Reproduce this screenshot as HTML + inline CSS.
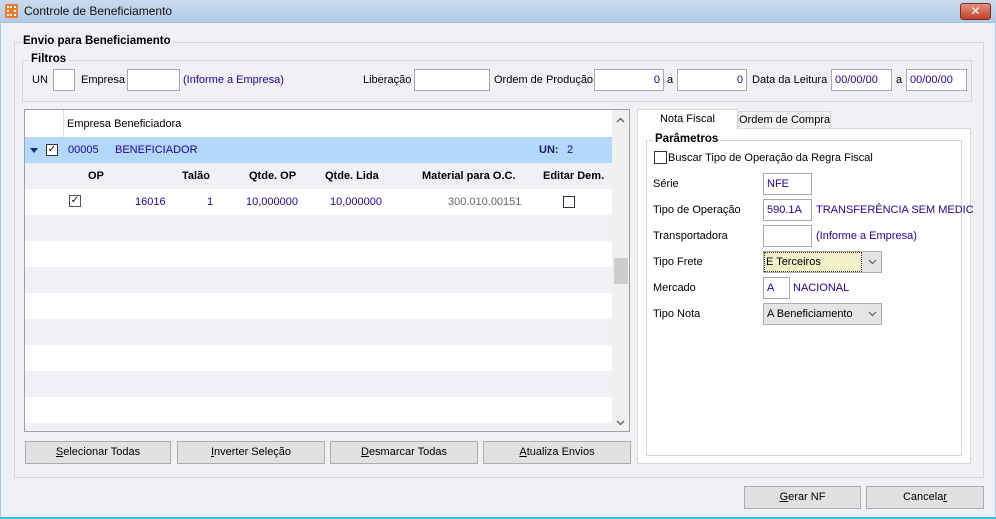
<!DOCTYPE html>
<html><head><meta charset="utf-8"><style>
*{box-sizing:border-box;margin:0;padding:0}
body{width:996px;height:519px;overflow:hidden;font-family:"Liberation Sans","DejaVu Sans",sans-serif;font-size:11px;color:#000;background:#f0f1f7;position:relative}
.a{position:absolute;white-space:nowrap}
.tb{left:0;top:0;width:996px;height:23px;background:linear-gradient(#c9daee,#b3cbe7);border-bottom:1px solid #a9c0dd}
.gb{border:1px solid #d5d6dc}
.gt{background:#f0f1f7;font-weight:bold;font-size:11.5px;padding:0 2px}
.in{background:#fff;border:1px solid #a9a9a9;height:22px;color:#2200aa;padding:0 3px;line-height:20px;font-size:11px}
.blue{color:#2200aa}
.btn{background:#e1e1e1;border:1px solid #adadad;height:23px;text-align:center;line-height:21px;font-size:11px}
.row{left:25px;width:587px;height:26px}
.cb{width:12px;height:12px;border:1px solid #333;background:#fff}
.hd{font-weight:bold;font-size:11px}
</style></head><body>
<div class="a tb"></div>
<div class="a" style="left:0;top:23px;width:1px;height:496px;background:#a9cbed"></div>
<div class="a" style="right:0;top:23px;width:1px;height:496px;background:#a9cbed"></div>
<div class="a" style="left:0;top:517px;width:996px;height:2px;background:#3bbde8"></div>
<div class="a" style="left:5px;top:4px;width:13px;height:14px;background:#f07a2c;border-radius:1px"></div>
<div class="a" style="left:7px;top:6px;width:9px;height:10px;border:2px dotted #fff"></div>
<div class="a" style="left:24px;top:4px;font-size:12px;color:#111">Controle de Beneficiamento</div>
<div class="a" style="left:960px;top:3px;width:31px;height:17px;background:linear-gradient(#e5917f,#c2412c);border:1px solid #7a2a20;border-radius:3px;color:#fff;text-align:center;font-weight:bold;font-size:12px;line-height:15px">✕</div>

<div class="a gb" style="left:14px;top:42px;width:970px;height:436px"></div>
<div class="a gt" style="left:21px;top:35px">Envio para Beneficiamento</div>
<div class="a gb" style="left:22px;top:60px;width:950px;height:42px"></div>
<div class="a gt" style="left:29px;top:53px">Filtros</div>

<div class="a" style="left:32px;top:74px">UN</div>
<div class="a in" style="left:53px;top:69px;width:22px"></div>
<div class="a" style="left:81px;top:74px">Empresa</div>
<div class="a in" style="left:127px;top:69px;width:53px"></div>
<div class="a blue" style="left:183px;top:74px">(Informe a Empresa)</div>
<div class="a" style="left:363px;top:74px">Liberação</div>
<div class="a in" style="left:414px;top:69px;width:76px"></div>
<div class="a" style="left:494px;top:74px">Ordem de Produção</div>
<div class="a in" style="left:594px;top:69px;width:70px;text-align:right">0</div>
<div class="a" style="left:667px;top:74px">a</div>
<div class="a in" style="left:677px;top:69px;width:70px;text-align:right">0</div>
<div class="a" style="left:752px;top:74px">Data da Leitura</div>
<div class="a in" style="left:831px;top:69px;width:61px">00/00/00</div>
<div class="a" style="left:896px;top:74px">a</div>
<div class="a in" style="left:906px;top:69px;width:61px">00/00/00</div>

<!-- grid -->
<div class="a" style="left:24px;top:109px;width:606px;height:323px;border:1px solid #a0a0a0;background:#fff"></div>
<div class="a" style="left:63px;top:110px;width:1px;height:27px;background:#e0e0e0"></div>
<div class="a" style="left:67px;top:118px">Empresa Beneficiadora</div>
<div class="a row" style="top:137px;background:#b3d8fc"></div>
<div class="a" style="left:30px;top:148px;width:0;height:0;border-left:4px solid transparent;border-right:4px solid transparent;border-top:5px solid #1a2a88"></div>
<div class="a cb" style="left:46px;top:144px;text-align:center;line-height:9px;font-size:10px">✓</div>
<div class="a blue" style="left:68px;top:144px">00005</div>
<div class="a blue" style="left:115px;top:144px">BENEFICIADOR</div>
<div class="a hd" style="left:539px;top:144px;color:#1a1a66">UN:</div>
<div class="a blue" style="left:567px;top:144px">2</div>
<div class="a row" style="top:163px;background:#f0f1f7"></div>
<div class="a hd" style="left:88px;top:170px">OP</div>
<div class="a hd" style="left:182px;top:170px">Talão</div>
<div class="a hd" style="left:249px;top:170px">Qtde. OP</div>
<div class="a hd" style="left:325px;top:170px">Qtde. Lida</div>
<div class="a hd" style="left:422px;top:170px">Material para O.C.</div>
<div class="a hd" style="left:543px;top:170px">Editar Dem.</div>
<div class="a cb" style="left:69px;top:195px;text-align:center;line-height:9px;font-size:10px;border-color:#555">✓</div>
<div class="a blue" style="left:135px;top:196px">16016</div>
<div class="a blue" style="left:207px;top:196px">1</div>
<div class="a blue" style="left:246px;top:196px">10,000000</div>
<div class="a blue" style="left:330px;top:196px">10,000000</div>
<div class="a" style="left:448px;top:196px;color:#666">300.010.00151</div>
<div class="a cb" style="left:563px;top:196px"></div>
<div class="a row" style="top:215px;background:#f0f1f7"></div>
<div class="a row" style="top:267px;background:#f0f1f7"></div>
<div class="a row" style="top:319px;background:#f0f1f7"></div>
<div class="a row" style="top:371px;background:#f0f1f7"></div>
<div class="a row" style="top:423px;height:8px;background:#f0f1f7"></div>
<div class="a" style="left:612px;top:110px;width:17px;height:321px;background:#f0f0f0"></div>
<div class="a" style="left:614px;top:258px;width:14px;height:26px;background:#cdcdcd"></div>
<svg class="a" style="left:616px;top:117px" width="9" height="6"><path d="M1 5L4.5 1.5L8 5" stroke="#606060" stroke-width="1.3" fill="none"/></svg>
<svg class="a" style="left:616px;top:420px" width="9" height="6"><path d="M1 1L4.5 4.5L8 1" stroke="#606060" stroke-width="1.3" fill="none"/></svg>

<div class="a btn" style="left:25px;top:441px;width:146px"><u>S</u>elecionar Todas</div>
<div class="a btn" style="left:177px;top:441px;width:148px"><u>I</u>nverter Seleção</div>
<div class="a btn" style="left:330px;top:441px;width:148px"><u>D</u>esmarcar Todas</div>
<div class="a btn" style="left:483px;top:441px;width:148px"><u>A</u>tualiza Envios</div>

<!-- tabs -->
<div class="a" style="left:637px;top:128px;width:334px;height:336px;background:#fff;border:1px solid #d9d9d9"></div>
<div class="a" style="left:738px;top:111px;width:93px;height:18px;background:#f0f0f0;border:1px solid #d9d9d9;text-align:center;line-height:17px">Ordem de Compra</div>
<div class="a" style="left:637px;top:109px;width:101px;height:21px;background:#fff;border:1px solid #d9d9d9;border-bottom:none;text-align:center;line-height:19px">Nota Fiscal</div>
<div class="a gb" style="left:646px;top:140px;width:316px;height:316px"></div>
<div class="a gt" style="left:653px;top:133px;background:#fff">Parâmetros</div>
<div class="a" style="left:654px;top:151px;width:13px;height:13px;border:1px solid #333"></div>
<div class="a" style="left:668px;top:152px">Buscar Tipo de Operação da Regra Fiscal</div>
<div class="a" style="left:653px;top:178px">Série</div>
<div class="a in" style="left:763px;top:173px;width:49px">NFE</div>
<div class="a" style="left:653px;top:204px">Tipo de Operação</div>
<div class="a in" style="left:763px;top:199px;width:49px">590.1A</div>
<div class="a blue" style="left:816px;top:204px">TRANSFERÊNCIA SEM MEDIC</div>
<div class="a" style="left:653px;top:230px">Transportadora</div>
<div class="a in" style="left:763px;top:225px;width:49px"></div>
<div class="a blue" style="left:816px;top:230px">(Informe a Empresa)</div>
<div class="a" style="left:653px;top:256px">Tipo Frete</div>
<div class="a" style="left:763px;top:251px;width:119px;height:22px;background:#e5e5e5;border:1px solid #adadad"></div>
<div class="a" style="left:764px;top:252px;width:98px;height:20px;border:1px dotted #333;background:#f2f0c8;padding:0 1px;line-height:18px">E Terceiros</div>
<svg class="a" style="left:868px;top:259px" width="9" height="6"><path d="M1 1L4.5 4.5L8 1" stroke="#606060" stroke-width="1.2" fill="none"/></svg>
<div class="a" style="left:653px;top:282px">Mercado</div>
<div class="a in" style="left:763px;top:277px;width:27px">A</div>
<div class="a blue" style="left:793px;top:282px">NACIONAL</div>
<div class="a" style="left:653px;top:308px">Tipo Nota</div>
<div class="a" style="left:763px;top:303px;width:119px;height:22px;background:#e5e5e5;border:1px solid #adadad;padding:0 3px;line-height:20px">A Beneficiamento</div>
<svg class="a" style="left:868px;top:311px" width="9" height="6"><path d="M1 1L4.5 4.5L8 1" stroke="#606060" stroke-width="1.2" fill="none"/></svg>

<div class="a btn" style="left:744px;top:486px;width:117px"><u>G</u>erar NF</div>
<div class="a btn" style="left:866px;top:486px;width:118px">Cancela<u>r</u></div>
</body></html>
